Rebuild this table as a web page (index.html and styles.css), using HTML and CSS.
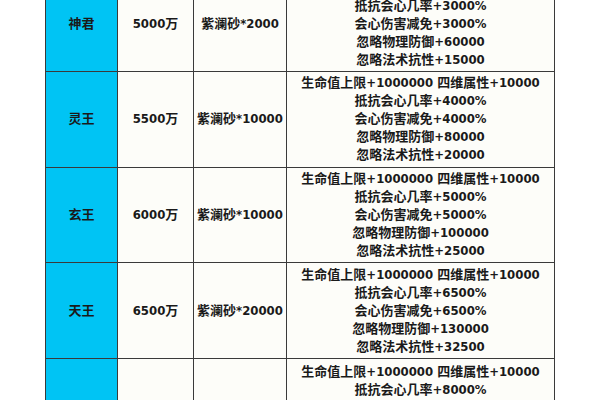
FILE: index.html
```html
<!DOCTYPE html>
<html lang="zh-CN">
<head>
<meta charset="utf-8">
<link rel="stylesheet" href="styles.css">
</head>
<body>
<table class="rank-table">
  <colgroup>
    <col class="c-name">
    <col class="c-cost">
    <col class="c-item">
    <col class="c-attr">
  </colgroup>
  <tbody>
    <tr>
      <td class="name">神君</td>
      <td>5000万</td>
      <td>紫澜砂*2000</td>
      <td class="attr">生命值上限+1000000 四维属性+10000<br>抵抗会心几率+3000%<br>会心伤害减免+3000%<br>忽略物理防御+60000<br>忽略法术抗性+15000</td>
    </tr>
    <tr>
      <td class="name">灵王</td>
      <td>5500万</td>
      <td>紫澜砂*10000</td>
      <td class="attr">生命值上限+1000000 四维属性+10000<br>抵抗会心几率+4000%<br>会心伤害减免+4000%<br>忽略物理防御+80000<br>忽略法术抗性+20000</td>
    </tr>
    <tr>
      <td class="name">玄王</td>
      <td>6000万</td>
      <td>紫澜砂*10000</td>
      <td class="attr">生命值上限+1000000 四维属性+10000<br>抵抗会心几率+5000%<br>会心伤害减免+5000%<br>忽略物理防御+100000<br>忽略法术抗性+25000</td>
    </tr>
    <tr>
      <td class="name">天王</td>
      <td>6500万</td>
      <td>紫澜砂*20000</td>
      <td class="attr">生命值上限+1000000 四维属性+10000<br>抵抗会心几率+6500%<br>会心伤害减免+6500%<br>忽略物理防御+130000<br>忽略法术抗性+32500</td>
    </tr>
    <tr class="last-row">
      <td class="name">帝王</td>
      <td>7000万</td>
      <td>紫澜砂*20000</td>
      <td class="attr">生命值上限+1000000 四维属性+10000<br>抵抗会心几率+8000%<br>会心伤害减免+8000%<br>忽略物理防御+160000<br>忽略法术抗性+40000</td>
    </tr>
  </tbody>
</table>
</body>
</html>
```

FILE: styles.css
```css
html, body {
  margin: 0;
  padding: 0;
  background: #ffffff;
}
body {
  overflow: hidden;
  height: 400px;
}
.rank-table {
  margin-left: 45px;
  margin-top: -24.7px;
  border-collapse: collapse;
  table-layout: fixed;
  width: 509px;
  font-family: "DejaVu Sans Condensed", "Noto Sans CJK SC", sans-serif;
  font-stretch: condensed;
  font-weight: bold;
  font-size: 13px;
  line-height: 18px;
  color: #1a1a1a;
}
.c-name { width: 72px; }
.c-cost { width: 76px; }
.c-item { width: 93px; }
.c-attr { width: 268px; }
.rank-table td {
  border: 1px solid #3a3a3a;
  background: #fdfdf9;
  text-align: center;
  vertical-align: middle;
  padding: 0;
  height: 94.67px;
  white-space: nowrap;
  overflow: hidden;
}
.rank-table .last-row td {
  height: 99px;
}
.rank-table td.name {
  background: #00c4f4;
}
```
